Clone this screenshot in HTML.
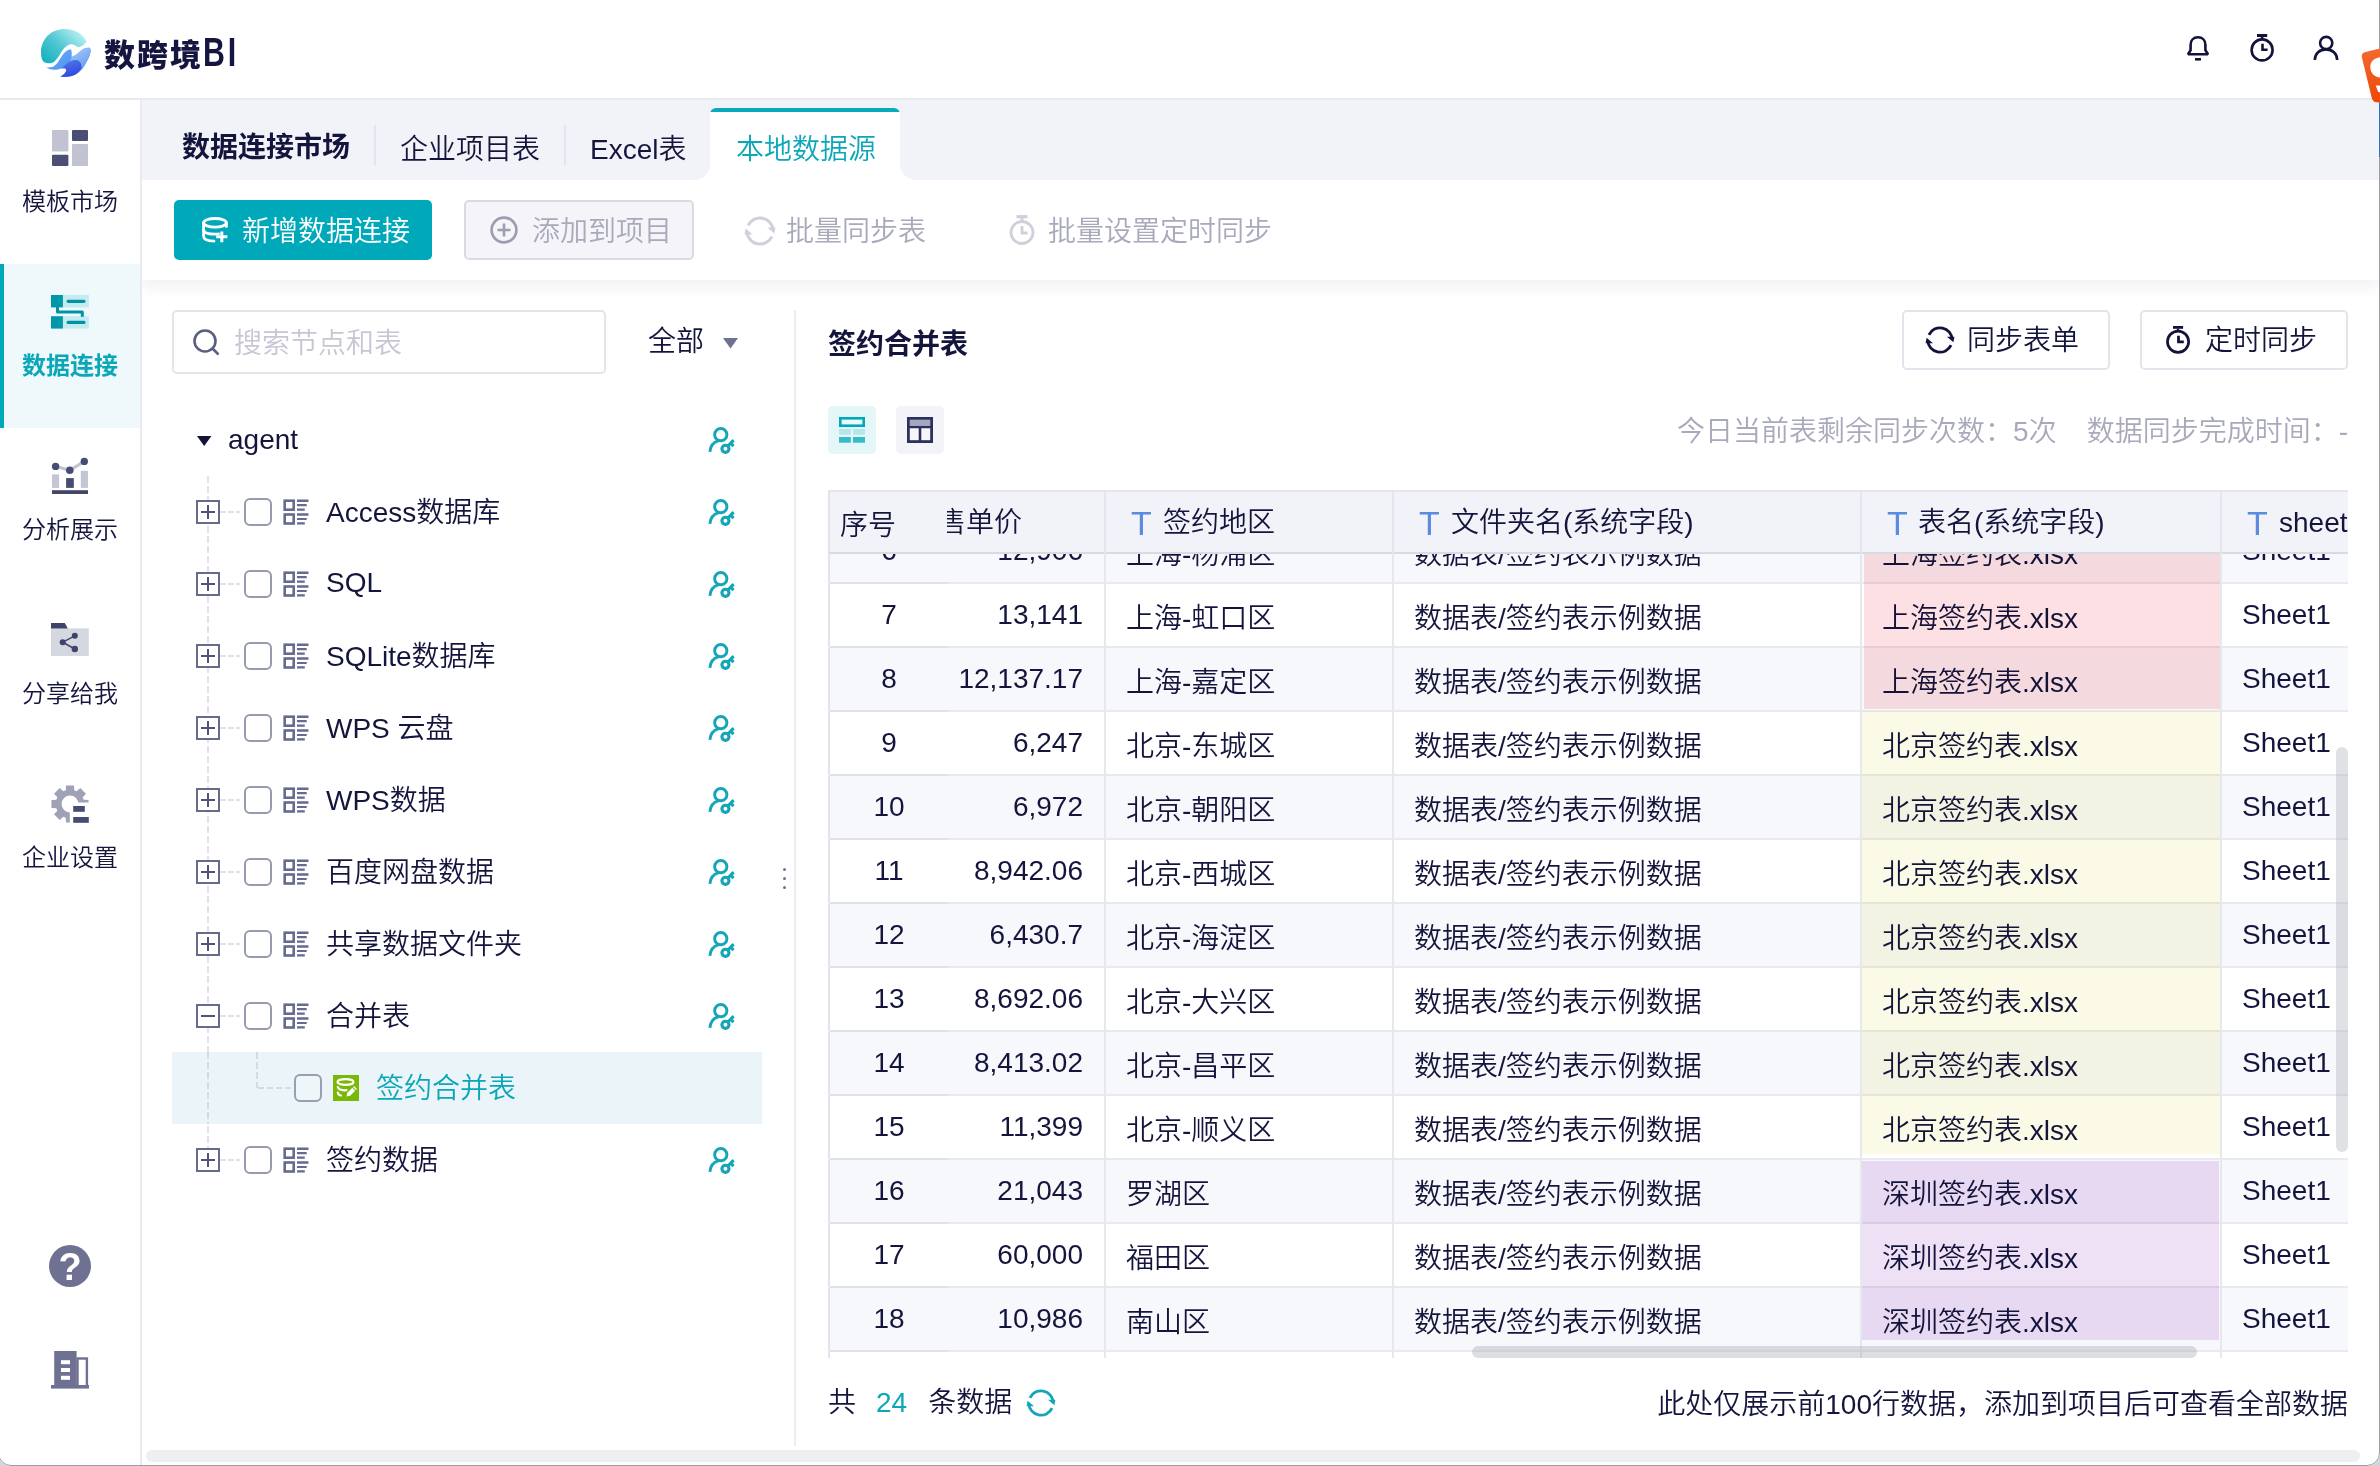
<!DOCTYPE html>
<html lang="zh-CN">
<head>
<meta charset="utf-8">
<title>数跨境BI</title>
<style>
*{box-sizing:border-box;margin:0;padding:0}
html,body{width:2380px;height:1466px;overflow:hidden;background:#fff}
body{font-family:"Liberation Sans","Noto Sans CJK SC",sans-serif;color:#14153d;font-size:28px;font-weight:350;position:relative}
.abs{position:absolute}
svg{display:block;overflow:visible}
/* header */
#hdr{position:absolute;left:0;top:0;width:2380px;height:100px;background:#fff;border-bottom:2px solid #e9eaef}
#logo{position:absolute;left:34px;top:22px;width:64px;height:64px}
#brand{position:absolute;left:104px;top:30.5px;font-size:31px;line-height:50px;font-weight:900;letter-spacing:2px;color:#15163f;white-space:nowrap}
#brand b{position:absolute;left:99px;top:-3.5px;font-size:41px;font-weight:700;letter-spacing:4px;transform-origin:0 50%;transform:scaleX(.74)}
.hicon{position:absolute;top:33px;width:32px;height:32px}
/* sidebar */
#side{position:absolute;left:0;top:100px;width:142px;height:1366px;background:#fff;border-right:2px solid #e9eaef}
.sitem{position:absolute;left:0;width:140px;height:164px}
.sitem svg{position:absolute;left:52px;top:30px;width:36px;height:36px}
.sitem .lb{position:absolute;left:0;top:84px;width:140px;text-align:center;font-size:24px;line-height:36px;color:#14153d}
.sitem.on{background:#eff9fb}
.sitem.on:before{content:"";position:absolute;left:0;top:0;width:4px;height:164px;background:#00a9ba}
.sitem.on .lb{color:#0ba7b9;font-weight:700}
/* tab bar */
#tabs{position:absolute;left:142px;top:100px;width:2238px;height:80px;background:#f2f3f8}
.tab{position:absolute;top:30px;font-size:28px;line-height:40px;white-space:nowrap;color:#14153d}
.tsep{position:absolute;top:25px;width:2px;height:40px;background:#e4e5ec}
#tabon{position:absolute;left:568px;top:8px;width:190px;height:72px;background:linear-gradient(#0aaabb 0,#0aaabb 4.300px,#fff 4.300px);border-radius:6px 6px 0 0}
#tabon:before,#tabon:after{content:"";position:absolute;bottom:0;width:16px;height:16px;background:radial-gradient(circle at 0 0,rgba(255,255,255,0) 15.500px,#fff 16.500px)}
#tabon:before{left:-16px}
#tabon:after{right:-16px;background:radial-gradient(circle at 100% 0,rgba(255,255,255,0) 15.500px,#fff 16.500px)}
/* toolbar */
#tool{position:absolute;left:142px;top:180px;width:2238px;height:100px;background:#fff;box-shadow:0 6px 16px rgba(30,35,80,.07)}
.btn{position:absolute;top:20px;height:60px;border-radius:5px;font-size:28px;line-height:64px;white-space:nowrap}
/* content */
#content{position:absolute;left:142px;top:280px;width:2238px;height:1186px}











/* tree */
#search{position:absolute;left:30px;top:30px;width:434px;height:64px;border:2px solid #e4e5ec;border-radius:5px;background:#fff}
#search span{position:absolute;left:60px;top:1px;line-height:62px;font-size:28px;color:#c6c7d3}
.trow{position:absolute;left:30px;width:590px;height:72px}
.trow .tx{position:absolute;left:154px;top:0;line-height:74px;font-size:28px;white-space:nowrap}
.exp{position:absolute;left:24px;top:24px;width:24px;height:24px;border:2px solid #666a8c;background:#fff}
.exp:before{content:"";position:absolute;left:3px;top:9px;width:14px;height:2px;background:#50547a}
.exp.plus:after{content:"";position:absolute;left:9px;top:3px;width:2px;height:14px;background:#50547a}
.hd{position:absolute;left:48px;top:35px;width:20px;height:2px;background:repeating-linear-gradient(90deg,#e1e2e9 0 6px,transparent 6px 8px)}
.cb{position:absolute;left:72px;top:22px;width:28px;height:28px;border:2px solid #959bad;border-radius:6px;background:#fff}
.gi{position:absolute;left:111px;top:23px;width:26px;height:26px}
.pk{position:absolute;left:536px;top:23px;width:27px;height:27px}
/* right */
.obtn{position:absolute;top:30px;width:208px;height:60px;border:2px solid #e4e5ec;border-radius:5px;background:#fff;font-size:28px;line-height:58px}
.tg{position:absolute;top:126px;width:48px;height:48px;border-radius:5px}
#tbl{position:absolute;left:686px;top:210px;width:1520px;height:868px;overflow:hidden;background:#fff}
.row{position:absolute;left:0;width:1520px;height:64px;border-bottom:2px solid #e9eaf0;background:#fff;font-size:28px;line-height:66px;white-space:nowrap}
.row.g{background:#f7f8fb}
.row>div{position:absolute;top:0;height:62px}
.c0{left:0;width:120px;text-align:center;border-left:2px solid #e3e4eb;line-height:61px}
.row .c0:after{content:"";position:absolute;left:0;bottom:-2px;width:118px;height:2px;background:#dfe0e8}
.c1{left:120px;width:135px;text-align:right;line-height:61px}
.c2{left:298px;line-height:70px}
.c3{left:586px;line-height:70px}
.c4{left:1054px;line-height:70px}
.c5{left:1414px;line-height:62px}
.vl{position:absolute;top:0;width:2px;height:868px;background:#e7e8ee}
#thead{position:absolute;left:0;top:0;width:1520px;height:64px;background:#f2f3f8;border-top:2px solid #e6e7ed;border-bottom:2px solid #d9dbe3;border-left:2px solid #e3e4eb;font-size:28px;line-height:62px;white-space:nowrap}
#thead div{position:absolute;top:0}
#thead .t{color:#5b8bde;font-size:34px;font-family:"Liberation Sans",sans-serif;line-height:63px}
.hl{position:absolute;mix-blend-mode:multiply}
</style>
</head>
<body>
<div id="content"><div id="search"><svg class="abs" style="left:18px;top:16px;width:30px;height:30px" viewBox="0 0 30 30" fill="none" stroke="#5b5f80" stroke-width="2.600"><circle cx="13" cy="13" r="10.500"/><path d="M20.500 20.500 L26.500 26.500"/></svg><span>搜索节点和表</span></div>
<div class="abs" style="left:506px;top:42px;font-size:28px;line-height:40px">全部</div>
<svg class="abs" style="left:580.5px;top:57.5px;width:15px;height:10.500px" viewBox="0 0 16 11"><path d="M0 0 H16 L8 11Z" fill="#6e7191"/></svg>
<div class="abs" style="left:65px;top:196px;width:2px;height:672px;background:repeating-linear-gradient(180deg,#e1e2e9 0 7px,transparent 7px 10px)"></div>
<div class="trow" style="top:124px"><svg class="abs" style="left:24.800px;top:32px;width:14.400px;height:10px" viewBox="0 0 16 11"><path d="M0 0 H16 L8 11Z" fill="#12123a"/></svg><div class="tx" style="left:56px;top:-1px">agent</div><svg class="pk" viewBox="0 0 26 26" fill="none" stroke="#14a6b8" stroke-width="2.800"><circle cx="12.300" cy="7.400" r="5.900"/><path d="M1.800 24 C2.200 18.500 5.500 14.500 10.500 13.200"/><circle cx="16.800" cy="21" r="3.400" stroke-width="3"/><path d="M18.900 18.600 L24.700 12.700" stroke-width="3"/><path d="M22 15.800 L24.600 18.400" stroke-width="3"/></svg></div>
<div class="trow" style="top:196px"><div class="exp plus"></div><div class="hd"></div><div class="cb"></div><svg class="gi" viewBox="0 0 26 26" fill="none" stroke="#666a8c"><rect x="1.700" y="1.700" width="9" height="9" stroke-width="2.600"/><rect x="1.700" y="15.500" width="9" height="9" stroke-width="2.600"/><path d="M14 1.700 H25.500 M14 15.500 H25.500" stroke-width="2.400"/><path d="M14 6.200 H23.700 M14 20 H23.700" stroke-width="2.200"/><path d="M14 10.700 H21.800 M14 24.400 H21.800" stroke-width="2.200"/></svg><div class="tx">Access数据库</div><svg class="pk" viewBox="0 0 26 26" fill="none" stroke="#14a6b8" stroke-width="2.800"><circle cx="12.300" cy="7.400" r="5.900"/><path d="M1.800 24 C2.200 18.500 5.500 14.500 10.500 13.200"/><circle cx="16.800" cy="21" r="3.400" stroke-width="3"/><path d="M18.900 18.600 L24.700 12.700" stroke-width="3"/><path d="M22 15.800 L24.600 18.400" stroke-width="3"/></svg></div>
<div class="trow" style="top:268px"><div class="exp plus"></div><div class="hd"></div><div class="cb"></div><svg class="gi" viewBox="0 0 26 26" fill="none" stroke="#666a8c"><rect x="1.700" y="1.700" width="9" height="9" stroke-width="2.600"/><rect x="1.700" y="15.500" width="9" height="9" stroke-width="2.600"/><path d="M14 1.700 H25.500 M14 15.500 H25.500" stroke-width="2.400"/><path d="M14 6.200 H23.700 M14 20 H23.700" stroke-width="2.200"/><path d="M14 10.700 H21.800 M14 24.400 H21.800" stroke-width="2.200"/></svg><div class="tx" style="top:-2px">SQL</div><svg class="pk" viewBox="0 0 26 26" fill="none" stroke="#14a6b8" stroke-width="2.800"><circle cx="12.300" cy="7.400" r="5.900"/><path d="M1.800 24 C2.200 18.500 5.500 14.500 10.500 13.200"/><circle cx="16.800" cy="21" r="3.400" stroke-width="3"/><path d="M18.900 18.600 L24.700 12.700" stroke-width="3"/><path d="M22 15.800 L24.600 18.400" stroke-width="3"/></svg></div>
<div class="trow" style="top:340px"><div class="exp plus"></div><div class="hd"></div><div class="cb"></div><svg class="gi" viewBox="0 0 26 26" fill="none" stroke="#666a8c"><rect x="1.700" y="1.700" width="9" height="9" stroke-width="2.600"/><rect x="1.700" y="15.500" width="9" height="9" stroke-width="2.600"/><path d="M14 1.700 H25.500 M14 15.500 H25.500" stroke-width="2.400"/><path d="M14 6.200 H23.700 M14 20 H23.700" stroke-width="2.200"/><path d="M14 10.700 H21.800 M14 24.400 H21.800" stroke-width="2.200"/></svg><div class="tx">SQLite数据库</div><svg class="pk" viewBox="0 0 26 26" fill="none" stroke="#14a6b8" stroke-width="2.800"><circle cx="12.300" cy="7.400" r="5.900"/><path d="M1.800 24 C2.200 18.500 5.500 14.500 10.500 13.200"/><circle cx="16.800" cy="21" r="3.400" stroke-width="3"/><path d="M18.900 18.600 L24.700 12.700" stroke-width="3"/><path d="M22 15.800 L24.600 18.400" stroke-width="3"/></svg></div>
<div class="trow" style="top:412px"><div class="exp plus"></div><div class="hd"></div><div class="cb"></div><svg class="gi" viewBox="0 0 26 26" fill="none" stroke="#666a8c"><rect x="1.700" y="1.700" width="9" height="9" stroke-width="2.600"/><rect x="1.700" y="15.500" width="9" height="9" stroke-width="2.600"/><path d="M14 1.700 H25.500 M14 15.500 H25.500" stroke-width="2.400"/><path d="M14 6.200 H23.700 M14 20 H23.700" stroke-width="2.200"/><path d="M14 10.700 H21.800 M14 24.400 H21.800" stroke-width="2.200"/></svg><div class="tx">WPS 云盘</div><svg class="pk" viewBox="0 0 26 26" fill="none" stroke="#14a6b8" stroke-width="2.800"><circle cx="12.300" cy="7.400" r="5.900"/><path d="M1.800 24 C2.200 18.500 5.500 14.500 10.500 13.200"/><circle cx="16.800" cy="21" r="3.400" stroke-width="3"/><path d="M18.900 18.600 L24.700 12.700" stroke-width="3"/><path d="M22 15.800 L24.600 18.400" stroke-width="3"/></svg></div>
<div class="trow" style="top:484px"><div class="exp plus"></div><div class="hd"></div><div class="cb"></div><svg class="gi" viewBox="0 0 26 26" fill="none" stroke="#666a8c"><rect x="1.700" y="1.700" width="9" height="9" stroke-width="2.600"/><rect x="1.700" y="15.500" width="9" height="9" stroke-width="2.600"/><path d="M14 1.700 H25.500 M14 15.500 H25.500" stroke-width="2.400"/><path d="M14 6.200 H23.700 M14 20 H23.700" stroke-width="2.200"/><path d="M14 10.700 H21.800 M14 24.400 H21.800" stroke-width="2.200"/></svg><div class="tx">WPS数据</div><svg class="pk" viewBox="0 0 26 26" fill="none" stroke="#14a6b8" stroke-width="2.800"><circle cx="12.300" cy="7.400" r="5.900"/><path d="M1.800 24 C2.200 18.500 5.500 14.500 10.500 13.200"/><circle cx="16.800" cy="21" r="3.400" stroke-width="3"/><path d="M18.900 18.600 L24.700 12.700" stroke-width="3"/><path d="M22 15.800 L24.600 18.400" stroke-width="3"/></svg></div>
<div class="trow" style="top:556px"><div class="exp plus"></div><div class="hd"></div><div class="cb"></div><svg class="gi" viewBox="0 0 26 26" fill="none" stroke="#666a8c"><rect x="1.700" y="1.700" width="9" height="9" stroke-width="2.600"/><rect x="1.700" y="15.500" width="9" height="9" stroke-width="2.600"/><path d="M14 1.700 H25.500 M14 15.500 H25.500" stroke-width="2.400"/><path d="M14 6.200 H23.700 M14 20 H23.700" stroke-width="2.200"/><path d="M14 10.700 H21.800 M14 24.400 H21.800" stroke-width="2.200"/></svg><div class="tx">百度网盘数据</div><svg class="pk" viewBox="0 0 26 26" fill="none" stroke="#14a6b8" stroke-width="2.800"><circle cx="12.300" cy="7.400" r="5.900"/><path d="M1.800 24 C2.200 18.500 5.500 14.500 10.500 13.200"/><circle cx="16.800" cy="21" r="3.400" stroke-width="3"/><path d="M18.900 18.600 L24.700 12.700" stroke-width="3"/><path d="M22 15.800 L24.600 18.400" stroke-width="3"/></svg></div>
<div class="trow" style="top:628px"><div class="exp plus"></div><div class="hd"></div><div class="cb"></div><svg class="gi" viewBox="0 0 26 26" fill="none" stroke="#666a8c"><rect x="1.700" y="1.700" width="9" height="9" stroke-width="2.600"/><rect x="1.700" y="15.500" width="9" height="9" stroke-width="2.600"/><path d="M14 1.700 H25.500 M14 15.500 H25.500" stroke-width="2.400"/><path d="M14 6.200 H23.700 M14 20 H23.700" stroke-width="2.200"/><path d="M14 10.700 H21.800 M14 24.400 H21.800" stroke-width="2.200"/></svg><div class="tx">共享数据文件夹</div><svg class="pk" viewBox="0 0 26 26" fill="none" stroke="#14a6b8" stroke-width="2.800"><circle cx="12.300" cy="7.400" r="5.900"/><path d="M1.800 24 C2.200 18.500 5.500 14.500 10.500 13.200"/><circle cx="16.800" cy="21" r="3.400" stroke-width="3"/><path d="M18.900 18.600 L24.700 12.700" stroke-width="3"/><path d="M22 15.800 L24.600 18.400" stroke-width="3"/></svg></div>
<div class="trow" style="top:700px"><div class="exp"></div><div class="hd"></div><div class="cb"></div><svg class="gi" viewBox="0 0 26 26" fill="none" stroke="#666a8c"><rect x="1.700" y="1.700" width="9" height="9" stroke-width="2.600"/><rect x="1.700" y="15.500" width="9" height="9" stroke-width="2.600"/><path d="M14 1.700 H25.500 M14 15.500 H25.500" stroke-width="2.400"/><path d="M14 6.200 H23.700 M14 20 H23.700" stroke-width="2.200"/><path d="M14 10.700 H21.800 M14 24.400 H21.800" stroke-width="2.200"/></svg><div class="tx">合并表</div><svg class="pk" viewBox="0 0 26 26" fill="none" stroke="#14a6b8" stroke-width="2.800"><circle cx="12.300" cy="7.400" r="5.900"/><path d="M1.800 24 C2.200 18.500 5.500 14.500 10.500 13.200"/><circle cx="16.800" cy="21" r="3.400" stroke-width="3"/><path d="M18.900 18.600 L24.700 12.700" stroke-width="3"/><path d="M22 15.800 L24.600 18.400" stroke-width="3"/></svg></div>
<div class="trow" style="top:772px;background:#ebf4f8"><div class="abs" style="left:84px;top:0;width:2px;height:36px;background:repeating-linear-gradient(180deg,#d5dbe3 0 7px,transparent 7px 10px)"></div><div class="abs" style="left:86px;top:35px;width:36px;height:2px;background:repeating-linear-gradient(90deg,#d5dbe3 0 6px,transparent 6px 9px)"></div><div class="cb" style="left:122px;background:#eef6f9;border-color:#98a0b0"></div><svg class="abs" style="left:161px;top:23px;width:26px;height:26px" viewBox="0 0 26 26"><rect width="26" height="26" fill="#7ab808"/><g fill="none" stroke="#fff" stroke-width="2.200" stroke-linecap="round"><ellipse cx="12.500" cy="7" rx="8" ry="2.800"/><path d="M4.800 12 C5.500 14.800 10 15.500 13.500 15.200"/><path d="M4.800 17.500 C5 19.500 6.500 20.300 8 20.500"/></g><path d="M13.500 21.500 L14.300 17.800 L19.300 12.800 L22.200 15.700 L17.200 20.700Z M20 12 L21 11 L24 14 L23 15Z" fill="#fff"/></svg><div class="tx" style="left:204px;color:#0ba7b9">签约合并表</div></div>
<div class="abs" style="left:65px;top:772px;width:2px;height:72px;background:repeating-linear-gradient(180deg,#d5dbe3 0 7px,transparent 7px 10px)"></div>
<div class="trow" style="top:844px"><div class="exp plus"></div><div class="hd"></div><div class="cb"></div><svg class="gi" viewBox="0 0 26 26" fill="none" stroke="#666a8c"><rect x="1.700" y="1.700" width="9" height="9" stroke-width="2.600"/><rect x="1.700" y="15.500" width="9" height="9" stroke-width="2.600"/><path d="M14 1.700 H25.500 M14 15.500 H25.500" stroke-width="2.400"/><path d="M14 6.200 H23.700 M14 20 H23.700" stroke-width="2.200"/><path d="M14 10.700 H21.800 M14 24.400 H21.800" stroke-width="2.200"/></svg><div class="tx">签约数据</div><svg class="pk" viewBox="0 0 26 26" fill="none" stroke="#14a6b8" stroke-width="2.800"><circle cx="12.300" cy="7.400" r="5.900"/><path d="M1.800 24 C2.200 18.500 5.500 14.500 10.500 13.200"/><circle cx="16.800" cy="21" r="3.400" stroke-width="3"/><path d="M18.900 18.600 L24.700 12.700" stroke-width="3"/><path d="M22 15.800 L24.600 18.400" stroke-width="3"/></svg></div>
<div class="abs" style="left:652px;top:30px;width:2px;height:1136px;background:#ecedf1"></div>
<div class="abs" style="left:641px;top:588px;width:3px;height:3px;border-radius:2px;background:#6e7191"></div>
<div class="abs" style="left:641px;top:597px;width:3px;height:3px;border-radius:2px;background:#6e7191"></div>
<div class="abs" style="left:641px;top:606px;width:3px;height:3px;border-radius:2px;background:#6e7191"></div>
<div class="abs" style="left:686px;top:45px;font-size:28px;font-weight:700;line-height:40px">签约合并表</div>
<div class="obtn" style="left:1760px"><svg class="abs" style="left:22px;top:14px;width:28px;height:28px" viewBox="0 0 28 28" fill="none" stroke="#12123a" stroke-width="2.800"><path d="M2.94 8.84 A12.2 12.2 0 0 1 26.19 13.57"/><path d="M25.06 19.16 A12.2 12.2 0 0 1 1.81 14.43"/><path d="M21 10.800 L28.400 10.800 L27.400 16.300Z" fill="#12123a" stroke="none"/><path d="M7 17.200 L-0.400 17.200 L0.600 11.700Z" fill="#12123a" stroke="none"/></svg><span class="abs" style="left:63px;top:0">同步表单</span></div>
<div class="obtn" style="left:1998px"><svg class="abs" style="left:24px;top:14px;width:24px;height:28px" viewBox="0 0 24 28" fill="none" stroke="#12123a" stroke-width="2.700"><circle cx="12.050" cy="15.700" r="10.600"/><path d="M7 1.400 H17.100" stroke-width="2.800"/><path d="M12 2.800 V5.200" stroke-width="2.200"/><path d="M12.500 9.700 V15.900 H17.800" stroke-width="2.800"/></svg><span class="abs" style="left:63px;top:0">定时同步</span></div>
<div class="tg" style="left:686px;background:#e4f6f8"><svg class="abs" style="left:11px;top:11px;width:26px;height:26px" viewBox="0 0 26 26"><rect x="1.300" y="1.300" width="23.400" height="7.400" fill="#eef9fa" stroke="#00a9ba" stroke-width="2.600"/><rect x="0" y="12" width="11.800" height="5.700" fill="#b4e6eb"/><rect x="14" y="12" width="12" height="5.700" fill="#b4e6eb"/><rect x="0" y="20" width="11.800" height="5.700" fill="#33bcc8"/><rect x="14" y="20" width="12" height="5.700" fill="#33bcc8"/></svg></div>
<div class="tg" style="left:754px;background:#f4f4f8"><svg class="abs" style="left:11px;top:11px;width:26px;height:26px" viewBox="0 0 26 26"><rect x="1.400" y="1.400" width="23.200" height="23.200" fill="#f6f6f9" stroke="#2a3060" stroke-width="2.800"/><rect x="3" y="3" width="20" height="5.500" fill="#a3a6bd"/><path d="M1.400 10 H24.600 M13 10 V24.600" stroke="#2a3060" stroke-width="2.600"/></svg></div>
<div class="abs" style="right:32px;top:132px;font-size:28px;line-height:40px;color:#a8aabb;white-space:pre">今日当前表剩余同步次数：5次<span style="display:inline-block;width:30px"></span>数据同步完成时间：-</div>
<div id="tbl"><div class="row g" style="top:30px"><div class="c0">6</div><div class="c1">12,906</div><div class="c2">上海-杨浦区</div><div class="c3">数据表/签约表示例数据</div><div class="c4">上海签约表.xlsx</div><div class="c5">Sheet1</div></div><div class="row" style="top:94px"><div class="c0">7</div><div class="c1">13,141</div><div class="c2">上海-虹口区</div><div class="c3">数据表/签约表示例数据</div><div class="c4">上海签约表.xlsx</div><div class="c5">Sheet1</div></div><div class="row g" style="top:158px"><div class="c0">8</div><div class="c1">12,137.17</div><div class="c2">上海-嘉定区</div><div class="c3">数据表/签约表示例数据</div><div class="c4">上海签约表.xlsx</div><div class="c5">Sheet1</div></div><div class="row" style="top:222px"><div class="c0">9</div><div class="c1">6,247</div><div class="c2">北京-东城区</div><div class="c3">数据表/签约表示例数据</div><div class="c4">北京签约表.xlsx</div><div class="c5">Sheet1</div></div><div class="row g" style="top:286px"><div class="c0">10</div><div class="c1">6,972</div><div class="c2">北京-朝阳区</div><div class="c3">数据表/签约表示例数据</div><div class="c4">北京签约表.xlsx</div><div class="c5">Sheet1</div></div><div class="row" style="top:350px"><div class="c0">11</div><div class="c1">8,942.06</div><div class="c2">北京-西城区</div><div class="c3">数据表/签约表示例数据</div><div class="c4">北京签约表.xlsx</div><div class="c5">Sheet1</div></div><div class="row g" style="top:414px"><div class="c0">12</div><div class="c1">6,430.7</div><div class="c2">北京-海淀区</div><div class="c3">数据表/签约表示例数据</div><div class="c4">北京签约表.xlsx</div><div class="c5">Sheet1</div></div><div class="row" style="top:478px"><div class="c0">13</div><div class="c1">8,692.06</div><div class="c2">北京-大兴区</div><div class="c3">数据表/签约表示例数据</div><div class="c4">北京签约表.xlsx</div><div class="c5">Sheet1</div></div><div class="row g" style="top:542px"><div class="c0">14</div><div class="c1">8,413.02</div><div class="c2">北京-昌平区</div><div class="c3">数据表/签约表示例数据</div><div class="c4">北京签约表.xlsx</div><div class="c5">Sheet1</div></div><div class="row" style="top:606px"><div class="c0">15</div><div class="c1">11,399</div><div class="c2">北京-顺义区</div><div class="c3">数据表/签约表示例数据</div><div class="c4">北京签约表.xlsx</div><div class="c5">Sheet1</div></div><div class="row g" style="top:670px"><div class="c0">16</div><div class="c1">21,043</div><div class="c2">罗湖区</div><div class="c3">数据表/签约表示例数据</div><div class="c4">深圳签约表.xlsx</div><div class="c5">Sheet1</div></div><div class="row" style="top:734px"><div class="c0">17</div><div class="c1">60,000</div><div class="c2">福田区</div><div class="c3">数据表/签约表示例数据</div><div class="c4">深圳签约表.xlsx</div><div class="c5">Sheet1</div></div><div class="row g" style="top:798px"><div class="c0">18</div><div class="c1">10,986</div><div class="c2">南山区</div><div class="c3">数据表/签约表示例数据</div><div class="c4">深圳签约表.xlsx</div><div class="c5">Sheet1</div></div><div class="row" style="top:862px"><div class="c0">19</div><div class="c1">9,820</div><div class="c2">宝安区</div><div class="c3">数据表/签约表示例数据</div><div class="c4">深圳签约表.xlsx</div><div class="c5">Sheet1</div></div><div class="hl" style="left:1036px;top:50px;width:356px;height:169px;background:#fce0e3"></div><div class="hl" style="left:1034px;top:221px;width:359px;height:443px;background:#fbfae7"></div><div class="hl" style="left:1034px;top:671px;width:357px;height:179px;background:#eee0f5"></div><div class="vl" style="left:276px"></div><div class="vl" style="left:564px"></div><div class="vl" style="left:1032px"></div><div class="vl" style="left:1392px"></div><div id="thead"><div style="left:10px;top:3px">序号</div><div style="left:117px;width:75px;height:60px;overflow:hidden"><span style="position:absolute;right:0;top:0">销售单价</span></div><div class="vl" style="left:274px;top:-2px;height:64px;background:#e4e5ec"></div><div class="t" style="left:301px">T</div><div style="left:333px">签约地区</div><div class="vl" style="left:562px;top:-2px;height:64px;background:#e4e5ec"></div><div class="t" style="left:589px">T</div><div style="left:621px">文件夹名(系统字段)</div><div class="vl" style="left:1030px;top:-2px;height:64px;background:#e4e5ec"></div><div class="t" style="left:1057px">T</div><div style="left:1088px">表名(系统字段)</div><div class="vl" style="left:1390px;top:-2px;height:64px;background:#e4e5ec"></div><div class="t" style="left:1417px">T</div><div style="left:1449px">sheet名(系统字段)</div></div><div class="abs" style="left:1508px;top:257px;width:12px;height:405px;border-radius:6px;background:rgba(160,163,175,.32)"></div><div class="abs" style="left:644px;top:856px;width:725px;height:12px;border-radius:6px;background:rgba(160,163,175,.36)"></div></div>
<div class="abs" style="left:686px;top:1103px;font-size:28px;line-height:40px;white-space:nowrap">共<span style="color:#0ba7b9;margin:0 21px 0 20px">24</span>条数据</div>
<svg class="abs" style="left:885px;top:1109px;width:28px;height:28px" viewBox="0 0 28 28" fill="none" stroke="#14a6b8" stroke-width="2.800"><path d="M2.94 8.84 A12.2 12.2 0 0 1 26.19 13.57"/><path d="M25.06 19.16 A12.2 12.2 0 0 1 1.81 14.43"/><path d="M21 10.800 L28.400 10.800 L27.400 16.300Z" fill="#14a6b8" stroke="none"/><path d="M7 17.200 L-0.400 17.200 L0.600 11.700Z" fill="#14a6b8" stroke="none"/></svg>
<div class="abs" style="right:32px;top:1105px;font-size:28px;line-height:40px;white-space:nowrap">此处仅展示前100行数据，添加到项目后可查看全部数据</div>
<div class="abs" style="left:4px;top:1170px;width:2214px;height:12px;border-radius:6px;background:#eeeff1"></div>
</div><!--/content-->
<div id="tool">
<div class="btn" style="left:32px;width:258px;background:#00a9ba;color:#fff"><svg class="abs" style="left:27.500px;top:17.400px;width:26px;height:26px" viewBox="0 0 26 26" fill="none" stroke="#fff" stroke-width="2.800" stroke-linecap="round"><ellipse cx="13" cy="5.800" rx="11.400" ry="4.300"/><path d="M1.600 6 V12.400 C1.600 15.600 7 17.100 13 17.100 C14.500 17.100 15.500 17 16.500 16.800"/><path d="M24.400 6 V9.500"/><path d="M1.600 12.400 V19.300 C1.600 22.500 6.500 24 12 24.100"/><path d="M14.200 19.800 H25.400 M19.800 14.400 V25.200" stroke-linecap="butt" stroke-width="3"/></svg><span class="abs" style="left:68px;top:0">新增数据连接</span></div>
<div class="btn" style="left:322px;width:230px;background:#f5f5f9;border:2px solid #d9dae4;color:#a8aabb;line-height:60px"><svg class="abs" style="left:24px;top:14px;width:28px;height:28px" viewBox="0 0 28 28" fill="none" stroke="#9a9cb1" stroke-width="2.600"><circle cx="14" cy="14" r="12.400"/><path d="M7.500 14 H20.500 M14 7.500 V20.500"/></svg><span class="abs" style="left:66px;top:0">添加到项目</span></div>
<svg class="abs" style="left:603px;top:36px;width:30px;height:30px" viewBox="0 0 28 28" fill="none" stroke="#cfd0da" stroke-width="2.800"><path d="M2.94 8.84 A12.2 12.2 0 0 1 26.19 13.57"/><path d="M25.06 19.16 A12.2 12.2 0 0 1 1.81 14.43"/><path d="M21 10.800 L28.400 10.800 L27.400 16.300Z" fill="#cfd0da" stroke="none"/><path d="M7 17.200 L-0.400 17.200 L0.600 11.700Z" fill="#cfd0da" stroke="none"/></svg>
<div class="btn" style="left:644px;color:#a8aabb">批量同步表</div>
<svg class="abs" style="left:866px;top:35px;width:28px;height:30px" viewBox="0 0 28 30" fill="none" stroke="#cfd0da" stroke-width="2.800"><circle cx="14" cy="17.500" r="11"/><path d="M8.500 1.700 H19.500" stroke-width="3.200"/><path d="M14 2 V6"/><path d="M14 11 V18 H19.500"/></svg>
<div class="btn" style="left:906px;color:#a8aabb">批量设置定时同步</div>
</div>
<div id="tabs">
<div class="tab" style="left:40px;top:28px;font-weight:700">数据连接市场</div>
<div class="tsep" style="left:232px"></div>
<div class="tab" style="left:258px">企业项目表</div>
<div class="tsep" style="left:422px"></div>
<div class="tab" style="left:448px">Excel表</div>
<div id="tabon"></div>
<div class="tab" style="left:594px;color:#0ba7b9">本地数据源</div>
</div>
<div id="side">
<div class="sitem" style="top:0"><svg viewBox="0 0 36 36"><rect x="0" y="0" width="16.4" height="21.5" rx="1" fill="#c1c3d3"/><rect x="20" y="0" width="16" height="11" rx="1" fill="#4b4f75"/><rect x="0" y="24.800" width="16.4" height="11.2" rx="1" fill="#4b4f75"/><rect x="20" y="14" width="16" height="22" rx="1" fill="#c1c3d3"/></svg><div class="lb">模板市场</div></div>
<div class="sitem on" style="top:164px"><svg viewBox="0 0 38 34" style="left:51px;top:31px;width:38px;height:34px"><rect x="11.500" y="0" width="26.400" height="12.400" fill="#c4ebef"/><rect x="11.500" y="21.200" width="26.400" height="12.400" fill="#c4ebef"/><rect x="0" y="0" width="11.900" height="12.400" fill="#0097a9"/><rect x="0" y="21.200" width="11.900" height="12.400" fill="#0097a9"/><path d="M17.100 6.300 H33 M17.100 27.400 H33" stroke="#0093a5" stroke-width="3.200" stroke-linecap="round" fill="none"/><path d="M6.500 12 V17.100 H31.300 V21.800" stroke="#0093a5" stroke-width="3" stroke-linejoin="round" fill="none"/></svg><div class="lb">数据连接</div></div>
<div class="sitem" style="top:328px"><svg viewBox="0 0 36 36"><path d="M3.500 8.400 L17.800 12.300 L32.300 3.400" stroke="#c1c3d3" stroke-width="3" fill="none"/><rect x="0" y="16.400" width="7.100" height="13.500" fill="#c4c6d4"/><rect x="28.800" y="12.800" width="7.200" height="17.100" fill="#c4c6d4"/><rect x="14.100" y="20.100" width="7.700" height="9.800" fill="#474c72"/><rect x="0" y="32.200" width="36" height="3.800" fill="#424769"/><circle cx="3.600" cy="8.400" r="3.700" fill="#474c72"/><circle cx="17.800" cy="12.300" r="3.800" fill="#474c72"/><circle cx="32.300" cy="3.400" r="3.700" fill="#474c72"/></svg><div class="lb">分析展示</div></div>
<div class="sitem" style="top:492px"><svg viewBox="0 0 38 33" style="left:51px;top:31px;width:38px;height:33px"><rect x="0" y="5.400" width="37.800" height="27.600" fill="#d5d7e1"/><path d="M0 0 H13.800 L16.800 5.600 H0Z" fill="#3d4369"/><path d="M23.800 12.800 L11.700 19.200 L23.800 26" stroke="#3d4369" stroke-width="1.500" fill="none"/><circle cx="11.700" cy="19.200" r="3" fill="#3d4369"/><circle cx="23.800" cy="12.800" r="3" fill="#3d4369"/><circle cx="23.800" cy="26" r="3.200" fill="#3d4369"/></svg><div class="lb">分享给我</div></div>
<div class="sitem" style="top:656px"><svg viewBox="0 0 38 38" style="left:51px;top:29px;width:38px;height:38px"><defs><clipPath id="gc"><path d="M-2 -2 H40 V17.600 H18.800 V40 H-2Z"/></clipPath></defs><path clip-path="url(#gc)" fill-rule="evenodd" fill="#9fa2b7" d="M14.77 5.34 L14.95 0.44 L23.05 0.44 L23.23 5.34 L25.67 6.35 L29.26 3.01 L34.99 8.74 L31.65 12.33 L32.66 14.77 L37.56 14.95 L37.56 23.05 L32.66 23.23 L31.65 25.67 L34.99 29.26 L29.26 34.99 L25.67 31.65 L23.23 32.66 L23.05 37.56 L14.95 37.56 L14.77 32.66 L12.33 31.65 L8.74 34.99 L3.01 29.26 L6.35 25.67 L5.34 23.23 L0.44 23.05 L0.44 14.95 L5.34 14.77 L6.35 12.33 L3.01 8.74 L8.74 3.01 L12.33 6.35Z M27.40 19.00 A8.4 8.4 0 1 0 10.60 19.00 A8.4 8.4 0 1 0 27.40 19.00 Z"/><rect x="22.200" y="21" width="11.600" height="5.800" fill="#474c72"/><rect x="22.200" y="32" width="15.600" height="5.800" fill="#474c72"/></svg><div class="lb">企业设置</div></div>
<svg class="abs" style="left:49px;top:1145px;width:42px;height:42px" viewBox="0 0 42 42"><circle cx="21" cy="21" r="21" fill="#6e7191"/><text x="21" y="34.500" text-anchor="middle" font-family="Liberation Sans,sans-serif" font-weight="700" font-size="38" fill="#fff">?</text></svg>
<svg class="abs" style="left:51px;top:1251px;width:38px;height:38px" viewBox="0 0 38 38"><rect x="3.200" y="0" width="22.400" height="35" fill="#6e7191"/><rect x="26.500" y="7.500" width="9.400" height="28" fill="none" stroke="#6e7191" stroke-width="2.400"/><rect x="0" y="34" width="38" height="3.600" fill="#6e7191"/><rect x="10" y="9.200" width="9" height="4" fill="#fff"/><rect x="10" y="17" width="9" height="4" fill="#fff"/><rect x="10" y="24.800" width="9" height="4" fill="#fff"/></svg>
</div>
<div id="hdr">
<svg id="logo" viewBox="0 0 64 64">
<defs>
<linearGradient id="lg1" x1="0.05" y1="0.850" x2="0.900" y2="0.200"><stop offset="0" stop-color="#19b3bf"/><stop offset=".5" stop-color="#55c8d4"/><stop offset="1" stop-color="#b2eef0"/></linearGradient>
<linearGradient id="lg2" x1="0" y1="0.200" x2="1" y2="1"><stop offset="0" stop-color="#67aef7"/><stop offset="1" stop-color="#3f7ff0"/></linearGradient>
<linearGradient id="lg3" x1="0" y1="0" x2="0.600" y2="1"><stop offset="0" stop-color="#a5cdfa"/><stop offset="1" stop-color="#6d9cf0"/></linearGradient>
<linearGradient id="lg4" x1="0.200" y1="0" x2="0.600" y2="1"><stop offset="0" stop-color="#4d7be6"/><stop offset="1" stop-color="#3144e0"/></linearGradient>
</defs>
<path d="M7 30.600 C7 16 18 7 30.600 7 C41 7 49 12 52.800 19.700 C50 23 47 25 43.700 25.300 C41 23 38.500 21.800 36.200 22.300 C33 23.500 30.500 25.500 28.400 28.400 C26 32 24.500 35 22.700 37.100 C21 39.500 19.500 40.500 17.500 41 C15 41.500 12.500 41.300 10.900 40.600 C9.500 40 8.300 38.500 7.900 37.100 C7.300 35 7 33 7 30.600Z" fill="url(#lg1)"/>
<path d="M12.200 45.400 C15 45.500 17.500 45.300 19.700 44.500 C21.800 43 23.200 41.300 24.500 39.300 C25.800 37.300 27 35.200 28.400 33.200 C29.800 31.200 31.300 29.500 33.200 28.400 C34.500 27.600 35.800 27.300 37.100 27.500 C37.800 30 37.900 32.500 37.600 34.900 C39.800 34 41.800 32.800 43.700 31.400 C45.600 30 47.400 28.400 49.300 27.100 C51.300 26 53.400 25.500 55.500 25.800 C56.300 26.500 56.700 27.400 56.800 28.400 C56.200 32 55 35.300 53.300 38.400 C51.800 41.500 50 44.500 48 47.200 C46 49.500 43.900 51.200 41.500 52.400 C39.400 53.500 37.200 54.200 34.900 54.600 C32 55 29 55 26.200 54.600 C28 53.800 29.500 52.800 30.600 51.500 C31.600 50.400 32.200 49.200 32.300 48 C32 47.200 31.400 46.600 30.600 46.300 C28.600 46.300 26.500 46.800 24.500 47.200 C22.200 47.700 19.800 47.900 17.500 47.600 C15.600 47.200 13.800 46.500 12.200 45.400Z" fill="url(#lg2)"/>
<path d="M37.600 34.900 C39.800 34 41.800 32.800 43.700 31.400 C45.600 30 47.400 28.400 49.300 27.100 C51.300 26 53.400 25.500 55.500 25.800 C56.300 26.500 56.700 27.400 56.800 28.400 C56.200 32 55 35.300 53.300 38.400 C51.800 41.500 50 44.500 48 47.200 C47.800 44.500 47.200 42.300 46.300 40.600 C45 38.800 43.400 38 41.500 38 C39.600 38 37.800 38.400 36 39.300Z" fill="url(#lg3)"/>
<path d="M27.900 46.300 C30 44 32.300 41.800 34.900 40.200 C37 38.800 39.200 38 41.500 38 C43.400 38 45 38.800 46.300 40.600 C47.200 42.300 47.500 44 47.200 45.900 C46.300 48 44.800 49.900 42.800 51.500 C40.500 53.200 37.800 54.200 34.900 54.600 C32 55 29 55 26.200 54.600 C28 53.800 29.500 52.800 30.600 51.500 C31.600 50.400 32.200 49.200 32.300 48 C32 47.200 31.400 46.600 30.600 46.300Z" fill="url(#lg4)"/>
</svg>
<div id="brand">数跨境<b>BI</b></div>
<svg class="hicon" style="left:2182px" viewBox="0 0 32 32" fill="none" stroke="#12123a" stroke-width="2.600" stroke-linecap="butt"><path d="M6 21.300 L8.600 17.300 V11.700 C8.600 7.200 11.600 4.300 16 4.300 C20.400 4.300 23.400 7.200 23.400 11.700 V17.300 L26 21.300 Z" stroke-linejoin="bevel"/><path d="M13 26.300 H19"/></svg>
<svg class="hicon" style="left:2246px" viewBox="0 0 32 32" fill="none" stroke="#12123a" stroke-width="2.600"><circle cx="16.100" cy="16.900" r="10.500"/><path d="M11 2.500 H21.200" stroke-width="3"/><path d="M16.100 2.800 V6.500"/><path d="M16.500 10.800 V16.700 H21.600"/></svg>
<svg class="hicon" style="left:2310px" viewBox="0 0 32 32" fill="none" stroke="#12123a" stroke-width="2.600"><circle cx="16.200" cy="10" r="6.100"/><path d="M4.800 27 C4.800 20.500 9.800 16.400 16 16.400 C22.200 16.400 27.200 20.500 27.200 27"/></svg>
<svg class="abs" style="left:2360px;top:44px;width:20px;height:62px;z-index:5" viewBox="0 0 20 62"><defs><linearGradient id="og" x1="0" y1="0" x2="0" y2="1"><stop offset="0" stop-color="#f3692f"/><stop offset="1" stop-color="#ee4708"/></linearGradient></defs><path d="M20 4.600 L5.500 8 C2.500 8.800 1.200 10.500 1.900 13.500 L11.800 54 C12.500 56.800 14 58 16.500 58.300 L20 58.800Z" fill="url(#og)"/><path d="M20 13.200 C13.500 14 10 18 10.300 23.500 C10.700 29.500 15 33.300 20 33.500Z" fill="#fff"/><path d="M15.700 41.400 L20 41.400 V48.200 L18.200 48Z" fill="#fff"/></svg>
<div class="abs" style="left:-2px;top:-20px;width:2382px;height:1486px;border:1.500px solid #9c9da1;border-radius:0 0 13px 13px;box-shadow:0 0 0 20px #d3d5da;pointer-events:none"></div>
<div class="abs" style="left:2378.500px;top:103px;width:1.500px;height:54px;background:#2a6fc0"></div>
</div>
</body>
</html>
